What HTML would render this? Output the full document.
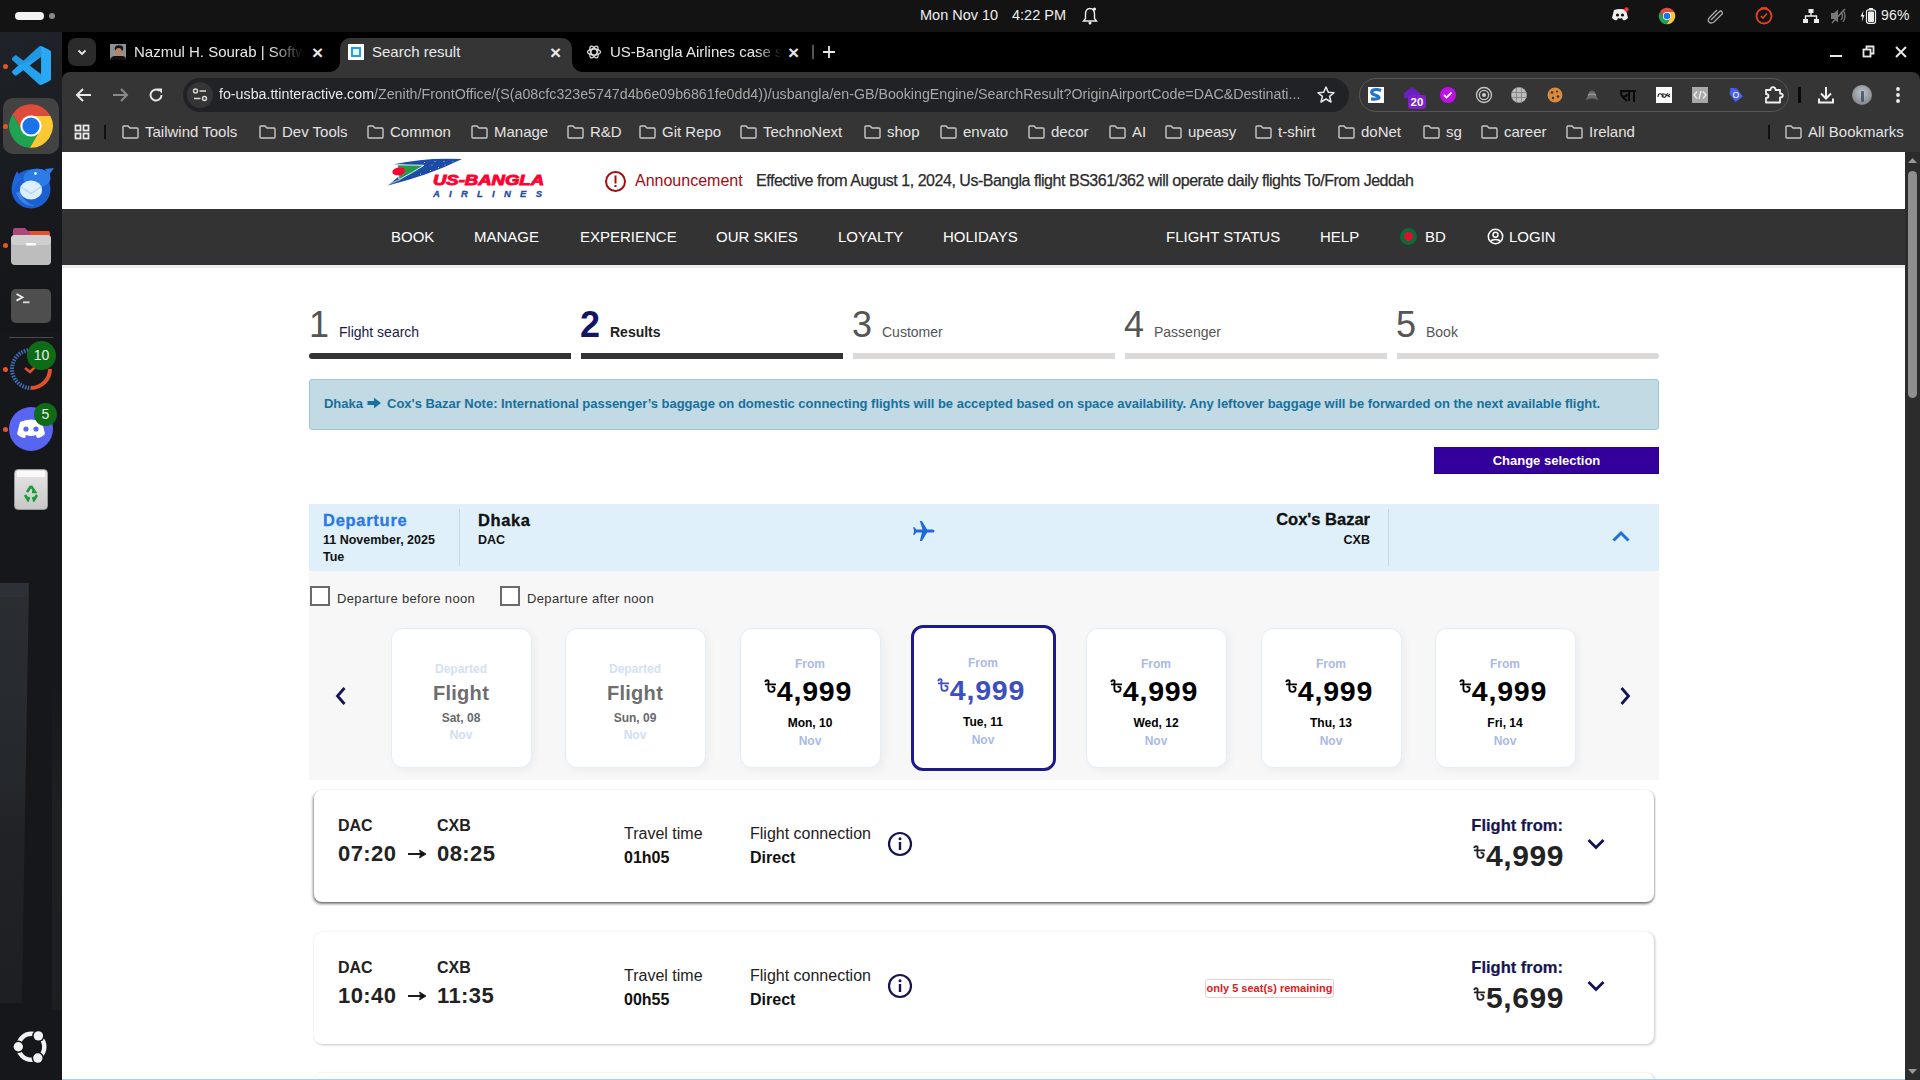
<!DOCTYPE html>
<html><head><meta charset="utf-8">
<style>
*{margin:0;padding:0;box-sizing:border-box}
html,body{width:1920px;height:1080px;overflow:hidden;background:#fff;font-family:"Liberation Sans",sans-serif}
.a{position:absolute}
#panel{left:0;top:0;width:1920px;height:32px;background:#131313;color:#eee;font-size:14.5px}
#dock{left:0;top:32px;width:62px;height:1048px;background:#16171a}
#tabs{left:62px;top:32px;width:1858px;height:60px;background:#000}
#toolbar{left:62px;top:72px;width:1858px;height:80px;background:#353535;border-radius:8px 8px 0 0}
#page{left:62px;top:152px;width:1843px;height:928px;background:#fff;overflow:hidden}
#sb{left:1905px;top:152px;width:15px;height:928px;background:#2c2c2c}
.ct{color:#e8e8e8;font-size:15px;white-space:nowrap}
.bm{color:#e3e3e3;font-size:15px;white-space:nowrap}
.fold{display:inline-block;width:16px;height:12px;border:1.6px solid #bbb;border-radius:2px;position:relative;vertical-align:-1px;margin-right:8px}
.fold:before{content:"";position:absolute;left:-1.6px;top:-4px;width:7px;height:3px;border:1.6px solid #bbb;border-bottom:none;border-radius:2px 2px 0 0}

.nav{top:228px;color:#fff;font-size:15px;white-space:nowrap}
.stn{top:305px;font-size:36px;line-height:40px}
.stl{top:324px;font-size:14px;white-space:nowrap}
.bar{top:353px;width:262px;height:6px}

.dc{top:628px;width:141px;height:140px;border:1px solid #e1eef9;border-radius:12px;background:#fff;box-shadow:3px 3px 8px rgba(0,0,0,0.045)}
.ct1{width:140px;text-align:center;font-size:12px;font-weight:bold;white-space:nowrap}
.fc{left:314px;width:1340px;height:112px;background:#fff;border-radius:8px;box-shadow:1px 1px 3px rgba(0,0,0,0.22),0 0 1px rgba(0,0,0,0.12)}
</style></head><body>
<div id="panel" class="a">
  <div class="a" style="left:15px;top:12px;width:29px;height:8px;border-radius:4px;background:#f2f2f2"></div>
  <div class="a" style="left:49px;top:13px;width:6px;height:6px;border-radius:3px;background:#888"></div>
  <div class="a" style="left:920px;top:7px">Mon Nov 10</div>
  <div class="a" style="left:1012px;top:7px">4:22 PM</div>
  <div class="a" style="left:1881px;top:7px;font-size:14px;letter-spacing:0.2px">96%</div>
</div>
<div id="dock" class="a"></div>
<div id="tabs" class="a"></div>
<div id="toolbar" class="a"></div>
<div id="page" class="a"></div>
<div id="sb" class="a"></div>


<!-- PANEL ICONS -->
<svg class="a" style="left:1082px;top:6px" width="16" height="20" viewBox="0 0 16 20"><path d="M8 2.5 C4.5 2.5 3.5 5.5 3.5 8 L3.5 12.5 L1.5 15 L14.5 15 L12.5 12.5 L12.5 8 C12.5 5.5 11.5 2.5 8 2.5Z" fill="none" stroke="#eee" stroke-width="1.4"/><circle cx="8" cy="17" r="1.5" fill="#eee"/><circle cx="12.5" cy="3" r="1.6" fill="#eee"/></svg>
<svg class="a" style="left:1611px;top:7px" width="18" height="16" viewBox="0 0 18 16"><path d="M3 3 Q9 1 15 3 L17 11 Q14 14 12 13 L11 11 Q9 12 7 11 L6 13 Q4 14 1 11 Z" fill="#eee"/><circle cx="6.5" cy="8" r="1.6" fill="#131313"/><circle cx="11.5" cy="8" r="1.6" fill="#131313"/><circle cx="15.5" cy="2.5" r="2.2" fill="#e33"/></svg>
<svg class="a" style="left:1658px;top:7px" width="18" height="18" viewBox="0 0 18 18"><path d="M9.00 5.10 L16.21 5.10 A8.2 8.2 0 0 0 2.02 4.70 L5.62 10.95 L9.00 9.00 Z" fill="#dd4b3a"/><path d="M5.62 10.95 L2.02 4.70 A8.2 8.2 0 0 0 8.77 17.20 L12.38 10.95 L9.00 9.00 Z" fill="#1da352"/><path d="M12.38 10.95 L8.77 17.20 A8.2 8.2 0 0 0 16.21 5.10 L9.00 5.10 L9.00 9.00 Z" fill="#fcc934"/><circle cx="9" cy="9" r="4.1" fill="#fff"/><circle cx="9" cy="9" r="3.3" fill="#1a73e8"/></svg>
<svg class="a" style="left:1706px;top:7px" width="18" height="18" viewBox="0 0 18 18"><path d="M5 13 L13 5 Q15 3 16 5 Q17 7 15 8 L8 15 Q5 17 3 15 Q1 13 4 10 L11 3" fill="none" stroke="#aaa" stroke-width="1.3"/></svg>
<svg class="a" style="left:1754px;top:6px" width="20" height="20" viewBox="0 0 20 20"><circle cx="10" cy="10" r="7.5" fill="none" stroke="#e8431c" stroke-width="1.8"/><path d="M6.8 10 L9 12 L13 7.5" fill="none" stroke="#e8431c" stroke-width="1.6"/><path d="M7 2 L13 2" stroke="#e8431c" stroke-width="1.6"/></svg>
<svg class="a" style="left:1802px;top:8px" width="18" height="16" viewBox="0 0 18 16"><rect x="6.5" y="1" width="5" height="4" fill="#eee"/><rect x="1" y="11" width="5" height="4" fill="#eee"/><rect x="12" y="11" width="5" height="4" fill="#eee"/><path d="M9 5 V8 M3.5 11 V8 H14.5 V11" fill="none" stroke="#eee" stroke-width="1.4"/></svg>
<svg class="a" style="left:1830px;top:8px" width="18" height="16" viewBox="0 0 18 16"><path d="M1 5 H4 L8 1.5 V14.5 L4 11 H1 Z" fill="#777"/><path d="M11 4 Q14 8 11 12 M13 2 Q17 8 13 14" fill="none" stroke="#777" stroke-width="1.3"/><path d="M2 15 L15 1" stroke="#777" stroke-width="1.4"/></svg>
<svg class="a" style="left:1859px;top:7px" width="18" height="18" viewBox="0 0 18 18"><path d="M4.5 3.5 L1.5 9.5 H3.5 L2.8 15 L5.5 8 H3.8 Z" fill="#eee"/><rect x="7.5" y="2.8" width="9" height="13.5" rx="2" fill="none" stroke="#eee" stroke-width="1.2"/><rect x="10" y="1" width="4" height="2" fill="#eee"/><rect x="9" y="4.5" width="6" height="10.5" rx="1" fill="#eee"/></svg>

<!-- DOCK -->
<div class="a" style="left:0;top:32px;width:62px;height:300px;background:linear-gradient(160deg,#1f2329 0%,#17191d 60%,#141518 100%)"></div>
<div class="a" style="left:0;top:583px;width:29px;height:420px;background:linear-gradient(180deg,#2a2e33 0%,#292c30 10%,#25282c 45%,#202226 60%,#1d1f23 100%);clip-path:polygon(0 0,100% 0,75% 100%,0 100%)"></div>
<div class="a" style="left:0;top:583px;width:28px;height:14px;background:#30343a;opacity:0.6"></div>
<div class="a" style="left:52px;top:690px;width:10px;height:320px;background:linear-gradient(180deg,#17181b,#1e2024 40%,#1c1e21 100%)"></div>
<svg class="a" style="left:12px;top:46px" width="39" height="39" viewBox="0 0 100 100"><path d="M96.46 10.8L75.86.87a6.23 6.23 0 0 0-7.1 1.2L29.35 38.04 12.18 25.01a4.16 4.16 0 0 0-5.320.24L1.36 30.25a4.16 4.16 0 0 0 0 6.16L16.25 50 1.36 63.59a4.16 4.16 0 0 0 0 6.16l5.5 5a4.16 4.16 0 0 0 5.32.24l17.17-13.030 39.41 35.96a6.23 6.23 0 0 0 7.1 1.2l20.6-9.92A6.24 6.24 0 0 0 100 83.6V16.4a6.24 6.24 0 0 0-3.54-5.6zM75.02 72.7L45.11 50l29.91-22.7v45.4z" fill="#23a2f0"/><path d="M96.46 10.8L75.86.87a6.23 6.23 0 0 0-7.1 1.2L29.35 38.04 12.18 25.01a4.16 4.16 0 0 0-5.32.24L1.36 30.25a4.16 4.16 0 0 0 0 6.16L16.25 50 75.02 27.3V2 Z" fill="#1f8ad2" opacity="0.5"/><path d="M75 0.5 L96.5 10.8 A6.24 6.24 0 0 1 100 16.4 V83.6 A6.24 6.24 0 0 1 96.46 89.2 L75 99.5 Z" fill="#2aa8f2"/></svg>
<div class="a" style="left:3px;top:64px;width:5px;height:5px;border-radius:50%;background:#e95420"></div>
<div class="a" style="left:3px;top:98px;width:56px;height:56px;border-radius:10px;background:#424242"></div>
<svg class="a" style="left:9px;top:104px" width="44" height="44" viewBox="0 0 44 44"><path d="M22.00 12.00 L41.37 12.00 A21.8 21.8 0 0 0 3.65 10.22 L13.34 27.00 L22.00 22.00 Z" fill="#dd4b3a"/><path d="M13.34 27.00 L3.65 10.22 A21.8 21.8 0 0 0 20.97 43.78 L30.66 27.00 L22.00 22.00 Z" fill="#1da352"/><path d="M30.66 27.00 L20.97 43.78 A21.8 21.8 0 0 0 41.37 12.00 L22.00 12.00 L22.00 22.00 Z" fill="#fcc934"/><circle cx="22" cy="22" r="10.6" fill="#fff"/><circle cx="22" cy="22" r="8.6" fill="#1a73e8"/></svg>
<div class="a" style="left:3px;top:124px;width:5px;height:5px;border-radius:50%;background:#e95420"></div>
<svg class="a" style="left:8px;top:164px" width="46" height="46" viewBox="0 0 46 46"><circle cx="23" cy="25" r="19.5" fill="#1b5fd2"/><path d="M9 7 Q3 18 5 29 Q8 19 14 15 Z" fill="#1f66d8"/><ellipse cx="29" cy="14" rx="13.5" ry="9.5" fill="#2b7be9"/><path d="M37 5 L46 4 L41 11 Z" fill="#2b7be9"/><circle cx="27.5" cy="9.5" r="1.4" fill="#e8f4ff"/><path d="M8 29 Q13 42 27 42 Q15 38 12 27 Z" fill="#4a92ee" opacity="0.7"/><ellipse cx="23" cy="26" rx="11" ry="9.5" fill="#dcefff"/><path d="M12.5 22.5 L23 29.5 L33.5 22.5" fill="none" stroke="#b4d4f2" stroke-width="1.2"/></svg>
<svg class="a" style="left:10px;top:226px" width="42" height="40" viewBox="0 0 42 40"><path d="M3 4 Q3 2 5 2 L15 2 L18 5 L38 5 Q40 5 40 8 L40 14 L3 14Z" fill="#b0457a"/><path d="M20 5 L38 5 Q40 5 40 8 L40 14 L20 14Z" fill="#e95420" opacity="0.85"/><rect x="1" y="9" width="40" height="30" rx="4" fill="#bdbdbd"/><rect x="1" y="9" width="40" height="10" rx="4" fill="#cfcfcf"/><rect x="16" y="17" width="10" height="2.5" rx="1" fill="#fff"/></svg>
<div class="a" style="left:3px;top:243px;width:5px;height:5px;border-radius:50%;background:#e95420"></div>
<div class="a" style="left:11px;top:289px;width:40px;height:34px;border-radius:5px;background:#4e4e4e"></div>
<svg class="a" style="left:11px;top:289px" width="40" height="34" viewBox="0 0 40 34"><path d="M5.5 5 L11.5 8.3 L5.5 11.6" fill="none" stroke="#eee" stroke-width="1.8"/><path d="M12 13.3 H18.5" stroke="#ddd" stroke-width="1.8"/></svg>
<div class="a" style="left:9px;top:337px;width:44px;height:1px;background:#4a4a4a"></div>
<svg class="a" style="left:8px;top:346px" width="46" height="46" viewBox="0 0 46 46"><path d="M23 4 A19 19 0 0 0 23 42" fill="none" stroke="#3d6bb8" stroke-width="4" stroke-dasharray="1.6 1.2"/><path d="M42 23 A19 19 0 0 1 23 42" fill="none" stroke="#e0502a" stroke-width="4"/><path d="M17 22 L22 26 L27 21" fill="none" stroke="#e0502a" stroke-width="2.5"/></svg>
<div class="a" style="left:27px;top:341px;width:29px;height:29px;border-radius:50%;background:#0e6b16;color:#eee;font-size:14px;text-align:center;line-height:29px">10</div>
<div class="a" style="left:3px;top:367px;width:5px;height:5px;border-radius:50%;background:#e95420"></div>
<svg class="a" style="left:9px;top:407px" width="44" height="44" viewBox="0 0 44 44"><circle cx="22" cy="22" r="22" fill="#5865f2"/><path d="M11 15 Q22 10 33 15 L36 27 Q32 31 28 31 L27 28 Q22 30 17 28 L16 31 Q12 31 8 27 Z" fill="#fff"/><circle cx="17" cy="22" r="2.6" fill="#5865f2"/><circle cx="27" cy="22" r="2.6" fill="#5865f2"/></svg>
<div class="a" style="left:34px;top:403px;width:23px;height:23px;border-radius:50%;background:#0e6b16;color:#eee;font-size:14px;text-align:center;line-height:23px">5</div>
<div class="a" style="left:3px;top:427px;width:5px;height:5px;border-radius:50%;background:#e95420"></div>
<div class="a" style="left:14px;top:469px;width:34px;height:41px;border-radius:4px;background:linear-gradient(#e6e6e6,#c8c8c8);border:1px solid #999"></div>
<div class="a" style="left:17px;top:471px;width:28px;height:6px;background:#fafafa"></div>
<svg class="a" style="left:22px;top:484px" width="18" height="18" viewBox="0 0 18 18"><path d="M9 2 L13 8 L10 8 M15 11 L12 16 L11 13 M3 11 L6 16 L7 13 M5 8 L9 2" fill="none" stroke="#1f9a3a" stroke-width="2.6"/></svg>
<svg class="a" style="left:8px;top:1024px" width="46" height="46" viewBox="0 0 46 46"><circle cx="23.3" cy="22.8" r="13.0" fill="none" stroke="#f2f2f4" stroke-width="4.4"/><circle cx="10.30" cy="22.80" r="6.2" fill="#131416"/><circle cx="10.30" cy="22.80" r="4.7" fill="#f2f2f4"/><circle cx="30.38" cy="11.90" r="6.2" fill="#131416"/><circle cx="30.38" cy="11.90" r="4.7" fill="#f2f2f4"/><circle cx="29.80" cy="34.06" r="6.2" fill="#131416"/><circle cx="29.80" cy="34.06" r="4.7" fill="#f2f2f4"/></svg>

<!-- TABS -->
<div class="a" style="left:68px;top:38px;width:28px;height:28px;border-radius:8px;background:#2b2b2b"></div>
<svg class="a" style="left:75px;top:45px" width="14" height="14" viewBox="0 0 14 14"><path d="M3.5 5.5 L7 9 L10.5 5.5" fill="none" stroke="#e8e8e8" stroke-width="1.8"/></svg>
<svg class="a" style="left:110px;top:44px" width="16" height="16" viewBox="0 0 16 16"><rect width="16" height="16" fill="#8e9195"/><ellipse cx="9" cy="4.5" rx="4.2" ry="3.3" fill="#151515"/><ellipse cx="8.6" cy="8" rx="3.3" ry="4" fill="#b98463"/><path d="M0 16 Q1 12 5 12 L12 12 Q16 12 16 16 Z" fill="#111"/></svg>
<div class="a ct" style="left:134px;top:43px;width:170px;overflow:hidden;-webkit-mask-image:linear-gradient(90deg,#000 80%,transparent)">Nazmul H. Sourab | Software</div>
<div class="a ct" style="left:312px;top:42px;font-size:19px;font-weight:bold">&#215;</div>
<div class="a" style="left:340px;top:38px;width:232px;height:40px;border-radius:10px 10px 0 0;background:#353535"></div>
<div class="a" style="left:330px;top:62px;width:10px;height:10px;background:radial-gradient(circle at 0 0,#000 9.5px,#353535 10px)"></div>
<div class="a" style="left:572px;top:62px;width:10px;height:10px;background:radial-gradient(circle at 100% 0,#000 9.5px,#353535 10px)"></div>
<div class="a" style="left:348px;top:44px;width:16px;height:16px;background:#fff"></div>
<div class="a" style="left:351px;top:47px;width:10px;height:10px;background:#1ea0e6"></div>
<div class="a" style="left:353px;top:49px;width:6px;height:6px;background:#eaf6fd"></div>
<div class="a ct" style="left:372px;top:43px">Search result</div>
<div class="a ct" style="left:550px;top:42px;font-size:19px;font-weight:bold">&#215;</div>
<svg class="a" style="left:586px;top:44px" width="16" height="16" viewBox="0 0 16 16"><g fill="none" stroke="#ddd" stroke-width="1.3"><ellipse cx="8" cy="8" rx="6.5" ry="3" /><ellipse cx="8" cy="8" rx="6.5" ry="3" transform="rotate(60 8 8)"/><ellipse cx="8" cy="8" rx="6.5" ry="3" transform="rotate(120 8 8)"/></g></svg>
<div class="a ct" style="left:610px;top:43px;width:172px;overflow:hidden;-webkit-mask-image:linear-gradient(90deg,#000 85%,transparent)">US-Bangla Airlines case study</div>
<div class="a ct" style="left:788px;top:42px;font-size:19px;font-weight:bold">&#215;</div>
<div class="a" style="left:812px;top:45px;width:2px;height:14px;background:#555"></div>
<svg class="a" style="left:822px;top:45px" width="14" height="14" viewBox="0 0 14 14"><path d="M7 1 V13 M1 7 H13" stroke="#e8e8e8" stroke-width="1.8"/></svg>
<div class="a" style="left:1830px;top:55px;width:12px;height:2px;background:#e8e8e8"></div>
<svg class="a" style="left:1862px;top:45px" width="14" height="14" viewBox="0 0 14 14"><rect x="1.5" y="4.5" width="7" height="7" fill="none" stroke="#e8e8e8" stroke-width="1.8"/><path d="M4.5 4.5 V1.5 H11.5 V8.5 H8.5" fill="none" stroke="#e8e8e8" stroke-width="1.8"/></svg>
<svg class="a" style="left:1894px;top:45px" width="14" height="14" viewBox="0 0 14 14"><path d="M2 2 L12 12 M12 2 L2 12" stroke="#e8e8e8" stroke-width="2"/></svg>

<!-- TOOLBAR -->
<svg class="a" style="left:74px;top:86px" width="20" height="18" viewBox="0 0 20 18"><path d="M17 9 H3 M9 3 L3 9 L9 15" fill="none" stroke="#e8e8e8" stroke-width="2"/></svg>
<svg class="a" style="left:110px;top:86px" width="20" height="18" viewBox="0 0 20 18"><path d="M3 9 H17 M11 3 L17 9 L11 15" fill="none" stroke="#8a8a8a" stroke-width="2"/></svg>
<svg class="a" style="left:146px;top:85px" width="20" height="20" viewBox="0 0 20 20"><path d="M15.5 10 A5.5 5.5 0 1 1 13.5 5.8" fill="none" stroke="#e8e8e8" stroke-width="2"/><path d="M11 3.5 L16 3.5 L16 8.5 Z" fill="#e8e8e8"/></svg>
<div class="a" style="left:183px;top:78px;width:1166px;height:34px;border-radius:17px;background:#212226"></div>
<div class="a" style="left:187px;top:82px;width:26px;height:26px;border-radius:13px;background:#353535"></div>
<svg class="a" style="left:191px;top:87px" width="18" height="16" viewBox="0 0 18 16"><circle cx="4.5" cy="4" r="2" fill="none" stroke="#ddd" stroke-width="1.4"/><path d="M8.5 4 H15" stroke="#ddd" stroke-width="1.5"/><circle cx="13.5" cy="11.5" r="2" fill="none" stroke="#ddd" stroke-width="1.4"/><path d="M3 11.5 H9.5" stroke="#ddd" stroke-width="1.5"/></svg>
<div class="a" style="left:219px;top:85px;font-size:15.5px;color:#e8e8e8;white-space:nowrap;transform:scaleX(0.918);transform-origin:0 0">fo-usba.ttinteractive.com<span style="color:#a8a8a8">/Zenith/FrontOffice/(S(a08cfc323e5747d4b6e09b6861fe0dd4))/usbangla/en-GB/BookingEngine/SearchResult?OriginAirportCode=DAC&amp;Destinati...</span></div>
<svg class="a" style="left:1316px;top:85px" width="20" height="20" viewBox="0 0 20 20"><path d="M10 2 L12.3 7.3 L18 7.7 L13.6 11.4 L15 17 L10 14 L5 17 L6.4 11.4 L2 7.7 L7.7 7.3 Z" fill="none" stroke="#e8e8e8" stroke-width="1.5" stroke-linejoin="round"/></svg>
<div class="a" style="left:1359px;top:78px;width:430px;height:34px;border-radius:17px;border:1px solid #575757"></div>
<div class="a" style="left:1368px;top:87px;width:16px;height:16px;background:#fff"></div>
<svg class="a" style="left:1368px;top:87px" width="16" height="16" viewBox="0 0 16 16"><path d="M13 3.5 Q8 1.5 4.5 3.5 Q2.5 5.5 5.5 7.5 Q11 9 11 10.5 Q10.5 12.5 3 12" fill="none" stroke="#1f73c8" stroke-width="3.2"/></svg>
<svg class="a" style="left:1403px;top:86px" width="18" height="12" viewBox="0 0 18 12"><path d="M1 7 L9 1 L17 7 V12 H1 Z" fill="#6a1fc0"/></svg>
<div class="a" style="left:1408px;top:95px;width:18px;height:14px;background:#7b22c8;color:#fff;font-weight:bold;font-size:11.5px;line-height:14px;text-align:center;border-radius:3px">20</div>
<div class="a" style="left:1440px;top:87px;width:16px;height:16px;border-radius:50%;background:#c010e8"></div>
<svg class="a" style="left:1440px;top:87px" width="16" height="16" viewBox="0 0 16 16"><path d="M4 8 L6.5 10.5 L11.5 5.5" fill="none" stroke="#fff" stroke-width="1.8"/></svg>
<svg class="a" style="left:1475px;top:86px" width="18" height="18" viewBox="0 0 18 18"><circle cx="9" cy="9" r="7.5" fill="none" stroke="#c8c8c8" stroke-width="1.3"/><circle cx="9" cy="9" r="4.6" fill="none" stroke="#c8c8c8" stroke-width="1.3"/><circle cx="9" cy="9" r="2" fill="#c8c8c8"/></svg>
<svg class="a" style="left:1511px;top:87px" width="16" height="16" viewBox="0 0 16 16"><circle cx="8" cy="8" r="7.8" fill="#bdbdbd"/><path d="M0.5 5.5 H15.5 M0.5 10.5 H15.5 M5.5 0.5 V15.5 M10.5 0.5 V15.5" stroke="#8a8a8a" stroke-width="1"/></svg>
<svg class="a" style="left:1547px;top:87px" width="16" height="16" viewBox="0 0 16 16"><circle cx="8" cy="8" r="7.5" fill="#d98a3c"/><circle cx="5" cy="5.5" r="1.3" fill="#4a2a10"/><circle cx="10" cy="4.5" r="1.1" fill="#4a2a10"/><circle cx="11" cy="9.5" r="1.3" fill="#4a2a10"/><circle cx="6" cy="11" r="1.2" fill="#4a2a10"/></svg>
<svg class="a" style="left:1583px;top:86px" width="18" height="18" viewBox="0 0 18 18"><path d="M3 14 L6 6 Q9 3 12 6 L15 14 Q9 11 3 14Z" fill="#6a6a6a"/><path d="M5 9 Q9 7 13 9" stroke="#aaa" stroke-width="1" fill="none"/></svg>
<svg class="a" style="left:1619px;top:87px" width="18" height="16" viewBox="0 0 18 16"><path d="M1 4 H12 M10 4 V14 M15 4 V15 M2.5 4 Q1 9 4.5 9.5 Q8 9.5 8 7 M3 9.5 L8 14" fill="none" stroke="#0a0a0a" stroke-width="2"/><path d="M12 4 H17" stroke="#0a0a0a" stroke-width="2"/></svg>
<div class="a" style="left:1656px;top:87px;width:16px;height:16px;background:#fff"></div>
<svg class="a" style="left:1656px;top:87px" width="16" height="16" viewBox="0 0 16 16"><path d="M2 10 Q2 6 5 7 Q7 8 6 10 M7 6 V10 Q9 11 10 9 Q10 7 8 7 M12 6 L10.5 8 L14 10 M12 9 L14 7" fill="none" stroke="#222" stroke-width="1.1"/></svg>
<div class="a" style="left:1692px;top:87px;width:16px;height:16px;background:#a8a8a8"></div>
<svg class="a" style="left:1692px;top:87px" width="16" height="16" viewBox="0 0 16 16"><path d="M5 4.5 L2 8 L5 11.5 M11 4.5 L14 8 L11 11.5 M9 4 L7 12" fill="none" stroke="#eee" stroke-width="1.3"/></svg>
<svg class="a" style="left:1727px;top:86px" width="18" height="18" viewBox="0 0 18 18"><path d="M2.5 2.5 H9 L16 9.5 L9.5 16 L2.5 9 Z" fill="#4a5ef0" transform="rotate(8 9 9)"/><circle cx="9" cy="9" r="2.6" fill="none" stroke="#c8d0ff" stroke-width="1.3"/></svg>
<svg class="a" style="left:1764px;top:86px" width="20" height="18" viewBox="0 0 20 18"><path d="M2 4 H6.5 Q6.5 1.2 9 1.2 Q11.5 1.2 11.5 4 H16 V7.5 Q18.8 7.5 18.8 9.5 Q18.8 11.5 16 11.5 V16.5 H2 V12 Q4.5 12 4.5 10 Q4.5 8 2 8 Z" fill="none" stroke="#f0f0f0" stroke-width="1.8" stroke-linejoin="round"/></svg>
<div class="a" style="left:1798px;top:87px;width:2.5px;height:16px;background:#0a0a0a"></div>
<svg class="a" style="left:1816px;top:85px" width="20" height="20" viewBox="0 0 20 20"><path d="M10 2 V13 M5 8.5 L10 13.5 L15 8.5 M3 13.5 V17.5 H17 V13.5" fill="none" stroke="#f0f0f0" stroke-width="2"/></svg>
<div class="a" style="left:1852px;top:85px;width:20px;height:20px;border-radius:50%;background:radial-gradient(circle at 50% 40%,#bfc4c8,#6f7478)"></div>
<div class="a" style="left:1861px;top:91px;width:3px;height:11px;background:#3a4a6a;border-radius:1px;opacity:0.8"></div>
<svg class="a" style="left:1892px;top:85px" width="12" height="20" viewBox="0 0 12 20"><circle cx="6" cy="4" r="1.9" fill="#f0f0f0"/><circle cx="6" cy="10" r="1.9" fill="#f0f0f0"/><circle cx="6" cy="16" r="1.9" fill="#f0f0f0"/></svg>

<!-- BOOKMARKS -->
<svg class="a" style="left:74px;top:124px" width="16" height="16" viewBox="0 0 16 16"><g fill="none" stroke="#e8e8e8" stroke-width="1.8"><rect x="1.5" y="1.5" width="5" height="5"/><rect x="9.5" y="1.5" width="5" height="5"/><rect x="1.5" y="9.5" width="5" height="5"/><rect x="9.5" y="9.5" width="5" height="5"/></g></svg>
<div class="a" style="left:104px;top:125px;width:2px;height:14px;background:#111"></div>
<svg class="a" style="left:122px;top:125px" width="17" height="14" viewBox="0 0 17 14"><path d="M1 2 Q1 1 2 1 L6 1 L8 3 L15 3 Q16 3 16 4 L16 12 Q16 13 15 13 L2 13 Q1 13 1 12 Z" fill="none" stroke="#c8c8c8" stroke-width="1.4"/></svg>
<div class="a bm" style="left:145px;top:123px">Tailwind Tools</div>
<svg class="a" style="left:259px;top:125px" width="17" height="14" viewBox="0 0 17 14"><path d="M1 2 Q1 1 2 1 L6 1 L8 3 L15 3 Q16 3 16 4 L16 12 Q16 13 15 13 L2 13 Q1 13 1 12 Z" fill="none" stroke="#c8c8c8" stroke-width="1.4"/></svg>
<div class="a bm" style="left:282px;top:123px">Dev Tools</div>
<svg class="a" style="left:367px;top:125px" width="17" height="14" viewBox="0 0 17 14"><path d="M1 2 Q1 1 2 1 L6 1 L8 3 L15 3 Q16 3 16 4 L16 12 Q16 13 15 13 L2 13 Q1 13 1 12 Z" fill="none" stroke="#c8c8c8" stroke-width="1.4"/></svg>
<div class="a bm" style="left:390px;top:123px">Common</div>
<svg class="a" style="left:471px;top:125px" width="17" height="14" viewBox="0 0 17 14"><path d="M1 2 Q1 1 2 1 L6 1 L8 3 L15 3 Q16 3 16 4 L16 12 Q16 13 15 13 L2 13 Q1 13 1 12 Z" fill="none" stroke="#c8c8c8" stroke-width="1.4"/></svg>
<div class="a bm" style="left:494px;top:123px">Manage</div>
<svg class="a" style="left:567px;top:125px" width="17" height="14" viewBox="0 0 17 14"><path d="M1 2 Q1 1 2 1 L6 1 L8 3 L15 3 Q16 3 16 4 L16 12 Q16 13 15 13 L2 13 Q1 13 1 12 Z" fill="none" stroke="#c8c8c8" stroke-width="1.4"/></svg>
<div class="a bm" style="left:590px;top:123px">R&amp;D</div>
<svg class="a" style="left:639px;top:125px" width="17" height="14" viewBox="0 0 17 14"><path d="M1 2 Q1 1 2 1 L6 1 L8 3 L15 3 Q16 3 16 4 L16 12 Q16 13 15 13 L2 13 Q1 13 1 12 Z" fill="none" stroke="#c8c8c8" stroke-width="1.4"/></svg>
<div class="a bm" style="left:662px;top:123px">Git Repo</div>
<svg class="a" style="left:740px;top:125px" width="17" height="14" viewBox="0 0 17 14"><path d="M1 2 Q1 1 2 1 L6 1 L8 3 L15 3 Q16 3 16 4 L16 12 Q16 13 15 13 L2 13 Q1 13 1 12 Z" fill="none" stroke="#c8c8c8" stroke-width="1.4"/></svg>
<div class="a bm" style="left:763px;top:123px">TechnoNext</div>
<svg class="a" style="left:864px;top:125px" width="17" height="14" viewBox="0 0 17 14"><path d="M1 2 Q1 1 2 1 L6 1 L8 3 L15 3 Q16 3 16 4 L16 12 Q16 13 15 13 L2 13 Q1 13 1 12 Z" fill="none" stroke="#c8c8c8" stroke-width="1.4"/></svg>
<div class="a bm" style="left:887px;top:123px">shop</div>
<svg class="a" style="left:940px;top:125px" width="17" height="14" viewBox="0 0 17 14"><path d="M1 2 Q1 1 2 1 L6 1 L8 3 L15 3 Q16 3 16 4 L16 12 Q16 13 15 13 L2 13 Q1 13 1 12 Z" fill="none" stroke="#c8c8c8" stroke-width="1.4"/></svg>
<div class="a bm" style="left:963px;top:123px">envato</div>
<svg class="a" style="left:1028px;top:125px" width="17" height="14" viewBox="0 0 17 14"><path d="M1 2 Q1 1 2 1 L6 1 L8 3 L15 3 Q16 3 16 4 L16 12 Q16 13 15 13 L2 13 Q1 13 1 12 Z" fill="none" stroke="#c8c8c8" stroke-width="1.4"/></svg>
<div class="a bm" style="left:1051px;top:123px">decor</div>
<svg class="a" style="left:1109px;top:125px" width="17" height="14" viewBox="0 0 17 14"><path d="M1 2 Q1 1 2 1 L6 1 L8 3 L15 3 Q16 3 16 4 L16 12 Q16 13 15 13 L2 13 Q1 13 1 12 Z" fill="none" stroke="#c8c8c8" stroke-width="1.4"/></svg>
<div class="a bm" style="left:1132px;top:123px">AI</div>
<svg class="a" style="left:1165px;top:125px" width="17" height="14" viewBox="0 0 17 14"><path d="M1 2 Q1 1 2 1 L6 1 L8 3 L15 3 Q16 3 16 4 L16 12 Q16 13 15 13 L2 13 Q1 13 1 12 Z" fill="none" stroke="#c8c8c8" stroke-width="1.4"/></svg>
<div class="a bm" style="left:1188px;top:123px">upeasy</div>
<svg class="a" style="left:1255px;top:125px" width="17" height="14" viewBox="0 0 17 14"><path d="M1 2 Q1 1 2 1 L6 1 L8 3 L15 3 Q16 3 16 4 L16 12 Q16 13 15 13 L2 13 Q1 13 1 12 Z" fill="none" stroke="#c8c8c8" stroke-width="1.4"/></svg>
<div class="a bm" style="left:1278px;top:123px">t-shirt</div>
<svg class="a" style="left:1338px;top:125px" width="17" height="14" viewBox="0 0 17 14"><path d="M1 2 Q1 1 2 1 L6 1 L8 3 L15 3 Q16 3 16 4 L16 12 Q16 13 15 13 L2 13 Q1 13 1 12 Z" fill="none" stroke="#c8c8c8" stroke-width="1.4"/></svg>
<div class="a bm" style="left:1361px;top:123px">doNet</div>
<svg class="a" style="left:1423px;top:125px" width="17" height="14" viewBox="0 0 17 14"><path d="M1 2 Q1 1 2 1 L6 1 L8 3 L15 3 Q16 3 16 4 L16 12 Q16 13 15 13 L2 13 Q1 13 1 12 Z" fill="none" stroke="#c8c8c8" stroke-width="1.4"/></svg>
<div class="a bm" style="left:1446px;top:123px">sg</div>
<svg class="a" style="left:1481px;top:125px" width="17" height="14" viewBox="0 0 17 14"><path d="M1 2 Q1 1 2 1 L6 1 L8 3 L15 3 Q16 3 16 4 L16 12 Q16 13 15 13 L2 13 Q1 13 1 12 Z" fill="none" stroke="#c8c8c8" stroke-width="1.4"/></svg>
<div class="a bm" style="left:1504px;top:123px">career</div>
<svg class="a" style="left:1566px;top:125px" width="17" height="14" viewBox="0 0 17 14"><path d="M1 2 Q1 1 2 1 L6 1 L8 3 L15 3 Q16 3 16 4 L16 12 Q16 13 15 13 L2 13 Q1 13 1 12 Z" fill="none" stroke="#c8c8c8" stroke-width="1.4"/></svg>
<div class="a bm" style="left:1589px;top:123px">Ireland</div>
<svg class="a" style="left:1785px;top:125px" width="17" height="14" viewBox="0 0 17 14"><path d="M1 2 Q1 1 2 1 L6 1 L8 3 L15 3 Q16 3 16 4 L16 12 Q16 13 15 13 L2 13 Q1 13 1 12 Z" fill="none" stroke="#c8c8c8" stroke-width="1.4"/></svg>
<div class="a bm" style="left:1808px;top:123px">All Bookmarks</div>
<div class="a" style="left:1768px;top:125px;width:2px;height:14px;background:#111"></div>
<!-- SCROLLBAR -->
<svg class="a" style="left:1905px;top:155px" width="15" height="10" viewBox="0 0 15 10"><path d="M3 8 L7.5 3 L12 8Z" fill="#999"/></svg>
<div class="a" style="left:1908px;top:171px;width:9px;height:227px;border-radius:5px;background:#8f8f8f"></div>
<svg class="a" style="left:1905px;top:1067px" width="15" height="10" viewBox="0 0 15 10"><path d="M3 2 L7.5 7 L12 2Z" fill="#999"/></svg>

<!-- SITE -->
<div class="a" style="left:62px;top:152px;width:1843px;height:57px;background:#fff"></div>
<svg class="a" style="left:380px;top:152px" width="180" height="58" viewBox="0 0 180 58">
  <path d="M8 33.4 Q50 23 82 7 Q45 5.2 14 12.2 Q24 12.6 30 13.5 Q20 24 8 33.4 Z" fill="#1c4ca6"/>
  <path d="M17.5 12.8 L44 13.3 Q33 20.5 19 27.6 Z" fill="#229a48" stroke="#e8eef8" stroke-width="1"/>
  <path d="M8 33.4 Q13 29 19 27.2 L22 27.6 Q14 31 8 33.4Z" fill="#8eaabd"/>
  <ellipse cx="18.7" cy="19.4" rx="6.4" ry="3.9" fill="#ff0030" transform="rotate(-8 18.7 19.4)"/>
  <g fill="#c8d4f0"><circle cx="44.5" cy="10.5" r="0.55"/><circle cx="55" cy="9.3" r="0.55"/><circle cx="64" cy="9.5" r="0.55"/><circle cx="73" cy="9.8" r="0.55"/><circle cx="52" cy="13" r="0.55"/><circle cx="65" cy="13" r="0.55"/><circle cx="58.5" cy="15.5" r="0.55"/><circle cx="50.5" cy="18.5" r="0.55"/><circle cx="40.5" cy="22" r="0.55"/></g>
  <text x="53" y="33.3" font-family="Liberation Sans" font-weight="bold" font-style="italic" font-size="14" fill="#ff0030" stroke="#ff0030" stroke-width="0.9" textLength="111" lengthAdjust="spacingAndGlyphs">US-BANGLA</text>
  <text x="53" y="44.5" font-family="Liberation Sans" font-weight="bold" font-style="italic" font-size="9.5" fill="#1f4aa8" stroke="#1f4aa8" stroke-width="0.3" textLength="109" lengthAdjust="spacing">AIRLINES</text>
</svg>
<svg class="a" style="left:604px;top:170px" width="23" height="23" viewBox="0 0 23 23"><circle cx="11.5" cy="11.5" r="9.5" fill="none" stroke="#a01010" stroke-width="2"/><rect x="10.5" y="5.5" width="2" height="8" fill="#a01010"/><rect x="10.5" y="15" width="2" height="2" fill="#a01010"/></svg>
<div class="a" style="left:635px;top:172px;font-size:16px;color:#a00c12;white-space:nowrap">Announcement</div>
<div class="a" style="left:756px;top:172px;font-size:16px;color:#2a2a2a;white-space:nowrap;letter-spacing:-0.46px;-webkit-text-stroke:0.25px #2a2a2a">Effective from August 1, 2024, Us-Bangla flight BS361/362 will operate daily flights To/From Jeddah</div>
<div class="a" style="left:62px;top:209px;width:1843px;height:56px;background:#333"></div>
<div class="a" style="left:62px;top:265px;width:1843px;height:3px;background:#efeef4"></div>
<div class="nav a" style="left:391px">BOOK</div>
<div class="nav a" style="left:474px">MANAGE</div>
<div class="nav a" style="left:580px">EXPERIENCE</div>
<div class="nav a" style="left:716px">OUR SKIES</div>
<div class="nav a" style="left:838px">LOYALTY</div>
<div class="nav a" style="left:943px">HOLIDAYS</div>
<div class="nav a" style="left:1166px">FLIGHT STATUS</div>
<div class="nav a" style="left:1320px">HELP</div>
<div class="a" style="left:1400px;top:228px;width:17px;height:17px;border-radius:50%;background:#0a6a3a"></div>
<div class="a" style="left:1404px;top:232px;width:9px;height:9px;border-radius:50%;background:#e0102a"></div>
<div class="nav a" style="left:1425px">BD</div>
<svg class="a" style="left:1487px;top:228px" width="17" height="17" viewBox="0 0 17 17"><circle cx="8.5" cy="8.5" r="7.2" fill="none" stroke="#fff" stroke-width="1.5"/><circle cx="8.5" cy="6.8" r="2.5" fill="none" stroke="#fff" stroke-width="1.4"/><path d="M3.8 13.5 C5 10.8 12 10.8 13.2 13.5" fill="none" stroke="#fff" stroke-width="1.4"/></svg>
<div class="nav a" style="left:1509px">LOGIN</div>

<!-- steps -->
<div class="stn a" style="left:309px;color:#555">1</div><div class="stl a" style="left:339px;color:#1a1a4a">Flight search</div>
<div class="stn a" style="left:580px;color:#141464;font-weight:bold">2</div><div class="stl a" style="left:610px;color:#222;font-weight:bold">Results</div>
<div class="stn a" style="left:852px;color:#555">3</div><div class="stl a" style="left:882px;color:#555">Customer</div>
<div class="stn a" style="left:1124px;color:#555">4</div><div class="stl a" style="left:1154px;color:#555">Passenger</div>
<div class="stn a" style="left:1396px;color:#555">5</div><div class="stl a" style="left:1426px;color:#555">Book</div>
<div class="bar a" style="left:309px;background:#333;border-radius:3px 0 0 3px"></div>
<div class="bar a" style="left:581px;background:#333"></div>
<div class="bar a" style="left:853px;background:#dcdad8"></div>
<div class="bar a" style="left:1125px;background:#dcdad8"></div>
<div class="bar a" style="left:1397px;background:#dcdad8;border-radius:0 3px 3px 0"></div>

<div class="a" style="left:309px;top:379px;width:1350px;height:51px;background:#c1dae4;border:1px solid #9fc6d6;border-radius:3px"></div>
<div class="a" style="left:324px;top:396px;font-size:13px;font-weight:bold;color:#18709c;white-space:nowrap;letter-spacing:-0.022px">Dhaka <svg width="15" height="12" viewBox="0 0 15 12" style="vertical-align:-1px;margin-right:2px"><path d="M0.5 4 H7 V0.8 L14 6 L7 11.2 V8 H0.5 Z" fill="#18709c"/></svg> Cox's Bazar Note: International passenger’s baggage on domestic connecting flights will be accepted based on space availability. Any leftover baggage will be forwarded on the next available flight.</div>

<div class="a" style="left:1434px;top:447px;width:225px;height:27px;background:#33009c;border:1px solid #2a0088;color:#fff;font-size:13px;font-weight:bold;text-align:center;line-height:25px">Change selection</div>

<!-- departure -->
<div class="a" style="left:309px;top:504px;width:1350px;height:67px;background:#dff0fa"></div>
<div class="a" style="left:323px;top:510.5px;font-size:16.5px;font-weight:bold;color:#2b78e4;letter-spacing:0.72px;-webkit-text-stroke:0.3px #2b78e4">Departure</div>
<div class="a" style="left:323px;top:533px;font-size:12.5px;font-weight:bold;color:#111">11 November, 2025</div>
<div class="a" style="left:323px;top:550px;font-size:12.5px;font-weight:bold;color:#111">Tue</div>
<div class="a" style="left:459px;top:509px;width:1px;height:57px;background:#c9d6df"></div>
<div class="a" style="left:478px;top:511px;font-size:16.5px;font-weight:bold;color:#111;letter-spacing:0.6px;-webkit-text-stroke:0.3px #111">Dhaka</div>
<div class="a" style="left:478px;top:533px;font-size:12.5px;font-weight:bold;color:#111">DAC</div>
<svg class="a" style="left:911px;top:519px" width="25" height="25" viewBox="0 0 24 24"><path d="M21 15.5v-2l-8-5V3c0-.8-.7-1.5-1.5-1.5S10 2.2 10 3v5.5l-8 5v2l8-2.5V19l-2 1.5V22l3.5-1 3.5 1v-1.5L13 19v-5.5z" fill="#1f68dd" transform="rotate(90 12 12)"/></svg>
<div class="a" style="left:1170px;top:510px;width:200px;text-align:right;font-size:16.5px;font-weight:bold;color:#111;-webkit-text-stroke:0.3px #111">Cox's Bazar</div>
<div class="a" style="left:1170px;top:533px;width:200px;text-align:right;font-size:12.5px;font-weight:bold;color:#111">CXB</div>
<div class="a" style="left:1388px;top:509px;width:1px;height:57px;background:#c9d6df"></div>
<svg class="a" style="left:1608px;top:528px" width="26" height="18" viewBox="0 0 26 18"><path d="M5.5 12.5 L13 5 L20.5 12.5" fill="none" stroke="#1f6fe0" stroke-width="3"/></svg>

<div class="a" style="left:309px;top:571px;width:1350px;height:209px;background:#f7f7f7"></div>
<div class="a" style="left:310px;top:586px;width:20px;height:20px;border:2px solid #6a6a6a;background:#fff"></div>
<div class="a" style="left:337px;top:591px;font-size:13px;color:#333;letter-spacing:0.35px">Departure before noon</div>
<div class="a" style="left:500px;top:586px;width:20px;height:20px;border:2px solid #6a6a6a;background:#fff"></div>
<div class="a" style="left:527px;top:591px;font-size:13px;color:#333;letter-spacing:0.35px">Departure after noon</div>

<!-- CARDS -->
<div class="a dc" style="left:391px"></div>
<div class="a ct1" style="left:391px;top:662px;color:#d3e1f5">Departed</div>
<div class="a ct1" style="left:391px;top:682px;font-size:20px;color:#6e6e6e;letter-spacing:0.3px">Flight</div>
<div class="a ct1" style="left:391px;top:711px;color:#6a6a6a">Sat, 08</div>
<div class="a ct1" style="left:391px;top:728px;color:#d0ddf3">Nov</div>
<div class="a dc" style="left:565px"></div>
<div class="a ct1" style="left:565px;top:662px;color:#d3e1f5">Departed</div>
<div class="a ct1" style="left:565px;top:682px;font-size:20px;color:#6e6e6e;letter-spacing:0.3px">Flight</div>
<div class="a ct1" style="left:565px;top:711px;color:#6a6a6a">Sun, 09</div>
<div class="a ct1" style="left:565px;top:728px;color:#d0ddf3">Nov</div>
<div class="a dc" style="left:740px"></div>
<div class="a ct1" style="left:740px;top:657px;color:#a9b9ea">From</div>
<div class="a ct1" style="left:738px;top:675px;font-size:28.5px;color:#000;letter-spacing:0.8px;display:flex;justify-content:center"><svg width="12" height="14" viewBox="0 0 12 14" style="flex:none;margin:4px 1px 0 0"><path d="M1.3 2.3 Q2.8 0.6 4.3 1.6 Q5 2.6 4.3 4.2 M1.8 5.4 H11.4 M4.4 4 V10 Q4.4 12.9 7.4 12.9 Q10.6 12.8 10.6 10 Q10.6 7.6 8.2 7.8" fill="none" stroke="#000" stroke-width="1.8" stroke-linecap="round"/></svg><span>4,999</span></div>
<div class="a ct1" style="left:740px;top:716px;color:#000">Mon, 10</div>
<div class="a ct1" style="left:740px;top:734px;color:#a9b9ea">Nov</div>
<div class="a" style="left:911px;top:625px;width:145px;height:146px;border:3px solid #1e1a8c;border-radius:12px;background:#fff"></div>
<div class="a ct1" style="left:913px;top:656px;color:#a9b9ea">From</div>
<div class="a ct1" style="left:911px;top:674px;font-size:28.5px;color:#3b4fc0;letter-spacing:0.8px;display:flex;justify-content:center"><svg width="12" height="14" viewBox="0 0 12 14" style="flex:none;margin:4px 1px 0 0"><path d="M1.3 2.3 Q2.8 0.6 4.3 1.6 Q5 2.6 4.3 4.2 M1.8 5.4 H11.4 M4.4 4 V10 Q4.4 12.9 7.4 12.9 Q10.6 12.8 10.6 10 Q10.6 7.6 8.2 7.8" fill="none" stroke="#3b4fc0" stroke-width="1.8" stroke-linecap="round"/></svg><span>4,999</span></div>
<div class="a ct1" style="left:913px;top:715px;color:#000">Tue, 11</div>
<div class="a ct1" style="left:913px;top:733px;color:#a9b9ea">Nov</div>
<div class="a dc" style="left:1086px"></div>
<div class="a ct1" style="left:1086px;top:657px;color:#a9b9ea">From</div>
<div class="a ct1" style="left:1084px;top:675px;font-size:28.5px;color:#000;letter-spacing:0.8px;display:flex;justify-content:center"><svg width="12" height="14" viewBox="0 0 12 14" style="flex:none;margin:4px 1px 0 0"><path d="M1.3 2.3 Q2.8 0.6 4.3 1.6 Q5 2.6 4.3 4.2 M1.8 5.4 H11.4 M4.4 4 V10 Q4.4 12.9 7.4 12.9 Q10.6 12.8 10.6 10 Q10.6 7.6 8.2 7.8" fill="none" stroke="#000" stroke-width="1.8" stroke-linecap="round"/></svg><span>4,999</span></div>
<div class="a ct1" style="left:1086px;top:716px;color:#000">Wed, 12</div>
<div class="a ct1" style="left:1086px;top:734px;color:#a9b9ea">Nov</div>
<div class="a dc" style="left:1261px"></div>
<div class="a ct1" style="left:1261px;top:657px;color:#a9b9ea">From</div>
<div class="a ct1" style="left:1259px;top:675px;font-size:28.5px;color:#000;letter-spacing:0.8px;display:flex;justify-content:center"><svg width="12" height="14" viewBox="0 0 12 14" style="flex:none;margin:4px 1px 0 0"><path d="M1.3 2.3 Q2.8 0.6 4.3 1.6 Q5 2.6 4.3 4.2 M1.8 5.4 H11.4 M4.4 4 V10 Q4.4 12.9 7.4 12.9 Q10.6 12.8 10.6 10 Q10.6 7.6 8.2 7.8" fill="none" stroke="#000" stroke-width="1.8" stroke-linecap="round"/></svg><span>4,999</span></div>
<div class="a ct1" style="left:1261px;top:716px;color:#000">Thu, 13</div>
<div class="a ct1" style="left:1261px;top:734px;color:#a9b9ea">Nov</div>
<div class="a dc" style="left:1435px"></div>
<div class="a ct1" style="left:1435px;top:657px;color:#a9b9ea">From</div>
<div class="a ct1" style="left:1433px;top:675px;font-size:28.5px;color:#000;letter-spacing:0.8px;display:flex;justify-content:center"><svg width="12" height="14" viewBox="0 0 12 14" style="flex:none;margin:4px 1px 0 0"><path d="M1.3 2.3 Q2.8 0.6 4.3 1.6 Q5 2.6 4.3 4.2 M1.8 5.4 H11.4 M4.4 4 V10 Q4.4 12.9 7.4 12.9 Q10.6 12.8 10.6 10 Q10.6 7.6 8.2 7.8" fill="none" stroke="#000" stroke-width="1.8" stroke-linecap="round"/></svg><span>4,999</span></div>
<div class="a ct1" style="left:1435px;top:716px;color:#000">Fri, 14</div>
<div class="a ct1" style="left:1435px;top:734px;color:#a9b9ea">Nov</div>
<svg class="a" style="left:333px;top:684px" width="16" height="24" viewBox="0 0 16 24"><path d="M11.5 4 L4.5 12 L11.5 20" fill="none" stroke="#141452" stroke-width="2.8"/></svg>
<svg class="a" style="left:1617px;top:684px" width="16" height="24" viewBox="0 0 16 24"><path d="M4.5 4 L11.5 12 L4.5 20" fill="none" stroke="#141452" stroke-width="2.8"/></svg>
<div class="a fc" style="top:790px;box-shadow:-1px 2px 3px rgba(0,0,0,0.45),1px 1px 2px rgba(0,0,0,0.25),0 0 1px rgba(0,0,0,0.1)"></div>
<div class="a" style="left:338px;top:817px;font-size:16px;font-weight:bold;color:#222">DAC</div>
<div class="a" style="left:437px;top:817px;font-size:16px;font-weight:bold;color:#222">CXB</div>
<div class="a" style="left:338px;top:841px;font-size:22px;font-weight:bold;color:#222;letter-spacing:0.4px">07:20</div>
<svg class="a" style="left:407px;top:847px" width="20" height="14" viewBox="0 0 20 14"><path d="M1 7 H16" stroke="#111" stroke-width="1.9"/><path d="M12.5 3 L19 7 L12.5 11 Q14.5 7 12.5 3Z" fill="#111" stroke="#111" stroke-width="0.8"/></svg>
<div class="a" style="left:437px;top:841px;font-size:22px;font-weight:bold;color:#222;letter-spacing:0.4px">08:25</div>
<div class="a" style="left:624px;top:825px;font-size:16px;color:#222">Travel time</div>
<div class="a" style="left:624px;top:849px;font-size:16px;font-weight:bold;color:#111">01h05</div>
<div class="a" style="left:750px;top:825px;font-size:16px;color:#222;white-space:nowrap">Flight connection</div>
<div class="a" style="left:750px;top:849px;font-size:16px;font-weight:bold;color:#111">Direct</div>
<svg class="a" style="left:886px;top:830px" width="28" height="28" viewBox="0 0 28 28"><circle cx="14" cy="14" r="11" fill="none" stroke="#141452" stroke-width="2.2"/><rect x="12.8" y="12" width="2.4" height="8" fill="#141452"/><circle cx="14" cy="8.8" r="1.5" fill="#141452"/></svg>
<div class="a" style="left:1363px;top:816px;width:200px;text-align:right;font-size:16.5px;font-weight:bold;color:#16164e;-webkit-text-stroke:0.2px #16164e">Flight from:</div>
<div class="a" style="left:1363px;top:839px;width:201px;font-size:30px;font-weight:bold;color:#222;letter-spacing:0.6px;display:flex;justify-content:flex-end"><svg width="12" height="14" viewBox="0 0 12 14" style="flex:none;margin:6px 1px 0 0"><path d="M1.3 2.3 Q2.8 0.6 4.3 1.6 Q5 2.6 4.3 4.2 M1.8 5.4 H11.4 M4.4 4 V10 Q4.4 12.9 7.4 12.9 Q10.6 12.8 10.6 10 Q10.6 7.6 8.2 7.8" fill="none" stroke="#222" stroke-width="1.8" stroke-linecap="round"/></svg><span>4,999</span></div>
<svg class="a" style="left:1584px;top:836px" width="24" height="16" viewBox="0 0 24 16"><path d="M4.5 4 L12 11.5 L19.5 4" fill="none" stroke="#141452" stroke-width="2.8"/></svg>
<div class="a fc" style="top:932px"></div>
<div class="a" style="left:338px;top:959px;font-size:16px;font-weight:bold;color:#222">DAC</div>
<div class="a" style="left:437px;top:959px;font-size:16px;font-weight:bold;color:#222">CXB</div>
<div class="a" style="left:338px;top:983px;font-size:22px;font-weight:bold;color:#222;letter-spacing:0.4px">10:40</div>
<svg class="a" style="left:407px;top:989px" width="20" height="14" viewBox="0 0 20 14"><path d="M1 7 H16" stroke="#111" stroke-width="1.9"/><path d="M12.5 3 L19 7 L12.5 11 Q14.5 7 12.5 3Z" fill="#111" stroke="#111" stroke-width="0.8"/></svg>
<div class="a" style="left:437px;top:983px;font-size:22px;font-weight:bold;color:#222;letter-spacing:0.4px">11:35</div>
<div class="a" style="left:624px;top:967px;font-size:16px;color:#222">Travel time</div>
<div class="a" style="left:624px;top:991px;font-size:16px;font-weight:bold;color:#111">00h55</div>
<div class="a" style="left:750px;top:967px;font-size:16px;color:#222;white-space:nowrap">Flight connection</div>
<div class="a" style="left:750px;top:991px;font-size:16px;font-weight:bold;color:#111">Direct</div>
<svg class="a" style="left:886px;top:972px" width="28" height="28" viewBox="0 0 28 28"><circle cx="14" cy="14" r="11" fill="none" stroke="#141452" stroke-width="2.2"/><rect x="12.8" y="12" width="2.4" height="8" fill="#141452"/><circle cx="14" cy="8.8" r="1.5" fill="#141452"/></svg>
<div class="a" style="left:1205px;top:979px;width:129px;height:19px;border:1px solid #f3c9c9;border-radius:3px;background:#fff;color:#e02020;font-size:11px;font-weight:bold;text-align:center;line-height:17px;white-space:nowrap">only 5 seat(s) remaining</div>
<div class="a" style="left:1363px;top:958px;width:200px;text-align:right;font-size:16.5px;font-weight:bold;color:#16164e;-webkit-text-stroke:0.2px #16164e">Flight from:</div>
<div class="a" style="left:1363px;top:981px;width:201px;font-size:30px;font-weight:bold;color:#222;letter-spacing:0.6px;display:flex;justify-content:flex-end"><svg width="12" height="14" viewBox="0 0 12 14" style="flex:none;margin:6px 1px 0 0"><path d="M1.3 2.3 Q2.8 0.6 4.3 1.6 Q5 2.6 4.3 4.2 M1.8 5.4 H11.4 M4.4 4 V10 Q4.4 12.9 7.4 12.9 Q10.6 12.8 10.6 10 Q10.6 7.6 8.2 7.8" fill="none" stroke="#222" stroke-width="1.8" stroke-linecap="round"/></svg><span>5,699</span></div>
<svg class="a" style="left:1584px;top:978px" width="24" height="16" viewBox="0 0 24 16"><path d="M4.5 4 L12 11.5 L19.5 4" fill="none" stroke="#141452" stroke-width="2.8"/></svg>
<div class="a fc" style="top:1073px"></div>
<div class="a" style="left:62px;top:1079px;width:1843px;height:1px;background:#9fd3f3"></div>
</body></html>
